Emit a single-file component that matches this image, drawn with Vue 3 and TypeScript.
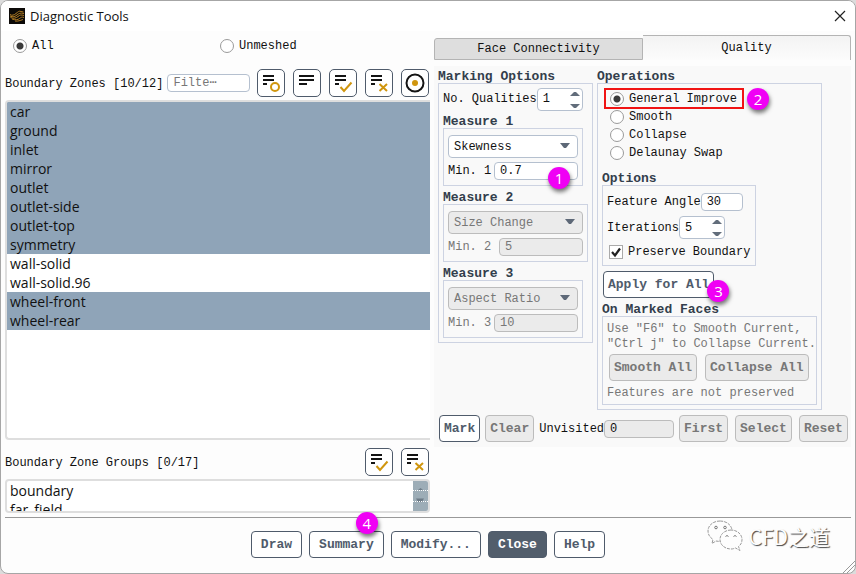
<script setup lang="ts">
import { reactive, ref } from 'vue'

interface Measure {
  id: number
  kind: string
  kinds: string[]
  min: string
  enabled: boolean
  wide: boolean
  note?: number
}

const scope = ref('All')
const scopes = ['All', 'Unmeshed']

const zones = [
  'car', 'ground', 'inlet', 'mirror', 'outlet', 'outlet-side', 'outlet-top',
  'symmetry', 'wall-solid', 'wall-solid.96', 'wheel-front', 'wheel-rear',
]
const selectedZones = ref(zones.filter((z) => !z.startsWith('wall')))

const groups = ['boundary', 'far_field']
const selectedGroups = ref<string[]>([])
const filter = ref('')

const qualities = ref(1)
const measures = reactive<Measure[]>([
  { id: 1, kind: 'Skewness', kinds: ['Skewness', 'Size Change', 'Aspect Ratio'], min: '0.7', enabled: true, wide: false, note: 1 },
  { id: 2, kind: 'Size Change', kinds: ['Skewness', 'Size Change', 'Aspect Ratio'], min: '5', enabled: false, wide: true },
  { id: 3, kind: 'Aspect Ratio', kinds: ['Skewness', 'Size Change', 'Aspect Ratio'], min: '10', enabled: false, wide: false },
])

const operation = ref('General Improve')
const operations = ['General Improve', 'Smooth', 'Collapse', 'Delaunay Swap']
const featureAngle = ref('30')
const iterations = ref(5)
const preserve = ref(true)
const unvisited = ref('0')

function selectAll(): void {
  selectedZones.value = [...zones]
}
function clearZones(): void {
  selectedZones.value = []
}
</script>

<template>
  <main class="dialog">
    <header class="titlebar">
      <svg class="logo" viewBox="0 0 16 16" aria-hidden="true">
        <rect width="16" height="16" fill="#0c0a08" />
        <g fill="none" stroke="#b07c24" stroke-width="1">
          <path d="M1 6.500C3 8 5 7 7 5.500S10 2.500 12 3.500L14.500 4" />
          <path d="M1 8C4 9.500 6 8.500 8 7S11 4.500 15 5.500" />
          <path d="M1.500 9.500C5 11 7 10 9 8.500S12 6.500 15 7.500" />
          <path d="M3 11C7 12.500 9 11.500 10.500 10.500S13 8.500 15 9.500" />
          <path d="M6 13C9 13.500 11 12.500 14 11.500" />
        </g>
      </svg>
      <h1>Diagnostic Tools</h1>
      <button class="close-x" type="button" aria-label="Close window">
        <svg viewBox="0 0 12 12"><path d="M1 1L11 11M11 1L1 11" stroke="#222" stroke-width="1.200" /></svg>
      </button>
    </header>

    <div class="body">
      <section class="left">
        <div class="scopes">
          <label v-for="s in scopes" :key="s" class="radio">
            <input v-model="scope" type="radio" name="scope" :value="s" />{{ s }}
          </label>
        </div>

        <div class="bar">
          <label class="bar-label" for="zone-filter">Boundary Zones [10/12]</label>
          <input id="zone-filter" v-model="filter" class="field filter" type="text" placeholder="Filte⋯" />
          <div class="tools">
            <button class="tool" type="button" aria-label="Toggle highlight">
              <svg viewBox="0 0 26 26"><path class="ln" d="M5 6H16M5 10H16M5 14H9" /><circle class="au" cx="17" cy="17" r="4" /></svg>
            </button>
            <button class="tool" type="button" aria-label="List order">
              <svg viewBox="0 0 26 26"><path class="ln" d="M5 6H20M5 10H20M5 14H13" /></svg>
            </button>
            <button class="tool" type="button" aria-label="Select all zones" @click="selectAll">
              <svg viewBox="0 0 26 26"><path class="ln" d="M5 6H16M5 10H16M5 14H9" /><path class="au" d="M10.500 17L14 21L21.500 12.500" /></svg>
            </button>
            <button class="tool" type="button" aria-label="Deselect all zones" @click="clearZones">
              <svg viewBox="0 0 26 26"><path class="ln" d="M5 6H16M5 10H16M5 14H9" /><path class="au" d="M13.500 14L21 21M21 14L13.500 21" /></svg>
            </button>
            <button class="tool" type="button" aria-label="Locate">
              <svg viewBox="0 0 26 26"><circle class="ln" cx="13" cy="13" r="8.500" /><circle cx="13" cy="13" r="3" fill="#d0960f" /></svg>
            </button>
          </div>
        </div>

        <select v-model="selectedZones" class="list zones" multiple aria-label="Boundary Zones">
          <option v-for="z in zones" :key="z" :value="z">{{ z }}</option>
        </select>

        <div class="bar">
          <label class="bar-label" for="groups">Boundary Zone Groups [0/17]</label>
          <div class="tools">
            <button class="tool" type="button" aria-label="Select all groups">
              <svg viewBox="0 0 26 26"><path class="ln" d="M5 6H16M5 10H16M5 14H9" /><path class="au" d="M10.500 17L14 21L21.500 12.500" /></svg>
            </button>
            <button class="tool" type="button" aria-label="Deselect all groups">
              <svg viewBox="0 0 26 26"><path class="ln" d="M5 6H16M5 10H16M5 14H9" /><path class="au" d="M13.500 14L21 21M21 14L13.500 21" /></svg>
            </button>
          </div>
        </div>
        <div class="group-box">
          <select id="groups" v-model="selectedGroups" class="list groups" multiple>
            <option v-for="g in groups" :key="g" :value="g">{{ g }}</option>
          </select>
          <svg class="scroll" viewBox="0 0 15 30" preserveAspectRatio="none" aria-hidden="true">
            <rect width="15" height="30" fill="#9dadb7" />
            <path d="M5 9L7.500 7L10 9Z" fill="#6e7c88" />
            <path d="M3 17.500H11L9 21H5Z" fill="#6e7c88" />
            <path d="M0 9.500H15M0 20.500H15" stroke="#fff" stroke-dasharray="1 1" />
          </svg>
        </div>
      </section>

      <section class="right">
        <nav class="tabs" role="tablist">
          <button class="tab" type="button" role="tab" aria-selected="false">Face Connectivity</button>
          <button class="tab active" type="button" role="tab" aria-selected="true">Quality</button>
        </nav>

        <div class="panel">
          <div class="columns">
            <section>
              <h2>Marking Options</h2>
              <div class="frame marking">
                <div class="row">
                  <label for="qualities">No. Qualities</label>
                  <span class="spin">
                    <input id="qualities" v-model="qualities" class="field" type="number" />
                    <svg viewBox="0 0 10 18" aria-hidden="true"><path d="M0 5L4 1H6L10 5ZM0 13L4 17H6L10 13Z" fill="#626d7b" /></svg>
                  </span>
                </div>
                <section v-for="m in measures" :key="m.id">
                  <h3>Measure {{ m.id }}</h3>
                  <div class="frame measure" :class="{ wide: m.wide, off: !m.enabled }">
                    <span class="combo">
                      <select v-model="m.kind" class="field" :disabled="!m.enabled" :aria-label="'Measure ' + m.id">
                        <option v-for="k in m.kinds" :key="k">{{ k }}</option>
                      </select>
                      <svg viewBox="0 0 10 5" aria-hidden="true"><path d="M0 0H10L6 5H4Z" fill="#5d6877" /></svg>
                    </span>
                    <div class="min">
                      <label :for="'min-' + m.id">Min. {{ m.id }}</label>
                      <span class="min-box">
                        <input :id="'min-' + m.id" v-model="m.min" class="field" type="text" :disabled="!m.enabled" />
                        <b v-if="m.note" class="badge on-min">{{ m.note }}</b>
                      </span>
                    </div>
                  </div>
                </section>
              </div>
            </section>

            <section>
              <h2>Operations</h2>
              <div class="frame operations">
                <div class="ops">
                  <label v-for="(o, i) in operations" :key="o" class="radio" :class="{ marked: i === 0 }">
                    <input v-model="operation" type="radio" name="operation" :value="o" />{{ o }}
                    <b v-if="i === 0" class="badge on-op">2</b>
                  </label>
                </div>

                <h3>Options</h3>
                <div class="frame options">
                  <div class="opt">
                    <label for="angle">Feature Angle</label>
                    <input id="angle" v-model="featureAngle" class="field angle" type="text" />
                  </div>
                  <div class="opt">
                    <label for="iterations">Iterations</label>
                    <span class="spin">
                      <input id="iterations" v-model="iterations" class="field" type="number" />
                      <svg viewBox="0 0 10 18" aria-hidden="true"><path d="M0 5L4 1H6L10 5ZM0 13L4 17H6L10 13Z" fill="#626d7b" /></svg>
                    </span>
                  </div>
                  <label class="check">
                    <span class="tick">
                      <input v-model="preserve" type="checkbox" />
                      <svg v-if="preserve" viewBox="0 0 14 14" aria-hidden="true"><path d="M3 7L6 10.500L11 3.500" fill="none" stroke="#222" stroke-width="2.200" /></svg>
                    </span>
                    Preserve Boundary
                  </label>
                </div>

                <button class="btn apply" type="button">Apply for All<b class="badge on-apply">3</b></button>

                <h3>On Marked Faces</h3>
                <div class="frame faces">
                  <p>Use "F6" to Smooth Current,<br />"Ctrl j" to Collapse Current.</p>
                  <div class="pair">
                    <button class="btn" type="button" disabled>Smooth All</button>
                    <button class="btn" type="button" disabled>Collapse All</button>
                  </div>
                  <p>Features are not preserved</p>
                </div>
              </div>
            </section>
          </div>

          <div class="marks">
            <button class="btn" type="button">Mark</button>
            <button class="btn" type="button" disabled>Clear</button>
            <div class="unvisited">
              <label for="unvisited">Unvisited</label>
              <input id="unvisited" v-model="unvisited" class="field" type="text" readonly />
            </div>
            <div class="nav">
              <button class="btn" type="button" disabled>First</button>
              <button class="btn" type="button" disabled>Select</button>
              <button class="btn" type="button" disabled>Reset</button>
            </div>
          </div>
        </div>
      </section>
    </div>

    <footer class="footer">
      <button class="btn" type="button">Draw</button>
      <button class="btn" type="button">Summary<b class="badge on-summary">4</b></button>
      <button class="btn" type="button">Modify...</button>
      <button class="btn primary" type="button">Close</button>
      <button class="btn" type="button">Help</button>
      <div class="brand">
        <svg viewBox="0 0 36 32" aria-hidden="true">
          <g fill="#fdfdfd" stroke="#999" stroke-width="1" stroke-dasharray="3 1">
            <path d="M13 1C6 1 1 5.500 1 11C1 14.500 3 17.500 6 19.500L5 23.500L9 21C11 21.500 13 21.500 15 21C22 20 25 16 25 11C25 5.500 20 1 13 1Z" />
            <path d="M24 10C17.500 10 13 14.500 13 19.500S17.500 29 24 29C25.500 29 27 28.700 28.500 28L33 30.500L31.500 26.500C34 24.500 35 22.500 35 19.500C35 14.500 30.500 10 24 10Z" />
          </g>
          <g fill="none" stroke="#777"><circle cx="9" cy="7.500" r="1.300" /><circle cx="18" cy="7.500" r="1.300" /><path d="M18.500 16.500Q20 14.500 21.500 16.500M26.500 16.500Q28 14.500 29.500 16.500" /></g>
        </svg>
        <span>CFD之道</span>
      </div>
      <svg class="grip" viewBox="0 0 12 12" aria-hidden="true"><path d="M0 12L12 0M4 12L12 4M8 12L12 8" stroke="#999" /></svg>
    </footer>
  </main>
</template>

<style>
body {
  background: #dcdcdc;
}
</style>

<style scoped>
.dialog,
.dialog * {
  box-sizing: border-box;
}
.dialog {
  display: flex;
  flex-direction: column;
  min-height: 100vh;
  overflow: hidden;
  border: 1px solid #a6a6a6;
  border-radius: 8px;
  background: #fdfdfd;
  color: #111;
  font: 12px/16px "Liberation Mono", "DejaVu Sans Mono", monospace;
}
button,
input,
select {
  margin: 0;
  font: inherit;
  color: inherit;
}
h1,
h2,
h3,
p {
  margin: 0;
}
.titlebar {
  display: flex;
  align-items: center;
  gap: 5px;
  height: 30px;
  padding: 0 9px 0 8px;
  background: #fff;
}
.logo {
  width: 16px;
  height: 16px;
}
h1 {
  flex: 1;
  font: 13px/18px "Open Sans", sans-serif;
}
.close-x {
  display: flex;
  padding: 0;
  border: 0;
  background: none;
}
.close-x svg {
  width: 12px;
  height: 12px;
}
.body {
  display: grid;
  grid-template-columns: 425fr 417fr;
  gap: 4px;
  flex: 1;
  padding: 0 4px 4px;
}
.left {
  display: flex;
  flex-direction: column;
  min-width: 0;
}
.scopes {
  display: grid;
  grid-template-columns: 207px 1fr;
  align-items: center;
  height: 30px;
  padding-left: 8px;
}
.radio {
  display: flex;
  align-items: center;
  gap: 5px;
}
.radio input {
  width: 14px;
  height: 14px;
  appearance: none;
  border: 1px solid #9a9a9a;
  border-radius: 50%;
  background: #fff;
}
.radio input:checked {
  background: radial-gradient(circle, #3a3a3a 3px, #fff 4px);
}
.bar {
  display: flex;
  align-items: center;
  gap: 4px;
  margin: 8px 1px 3px 0;
}
.bar-label {
  padding-top: 2px;
  white-space: nowrap;
}
.field {
  height: 18px;
  padding: 0 5px;
  border: 1px solid #b5c0cf;
  border-radius: 4px;
  background: #fff;
  outline: 0;
}
.filter {
  flex: 1;
  min-width: 0;
}
.filter::placeholder {
  color: #777;
}
.tools {
  display: flex;
  gap: 8px;
  margin-left: auto;
  padding-left: 3px;
}
.tool {
  width: 28px;
  height: 28px;
  padding: 0;
  border: 1px solid #4f5b6b;
  border-radius: 5px;
  background: #fff;
}
.tool svg {
  display: block;
  width: 26px;
  height: 26px;
}
.ln {
  fill: none;
  stroke: #141414;
  stroke-width: 2;
}
.au {
  fill: none;
  stroke: #d0960f;
  stroke-width: 2;
}
.list {
  display: block;
  width: 100%;
  padding: 0;
  border: 2px solid #dedede;
  border-radius: 4px;
  outline: 0;
  background: #fff;
  color: #111;
  font: 14px/19px "Open Sans", sans-serif;
  overflow: hidden;
  scrollbar-width: none;
}
.list option {
  height: 19px;
  min-height: 19px;
  padding: 0 3px;
}
.list option:checked {
  background: #8fa4b8 linear-gradient(#8fa4b8, #8fa4b8);
  color: #111;
}
.zones {
  flex: 1;
  min-height: 232px;
  border-right: 0;
  border-radius: 4px 0 0 4px;
}
.group-box {
  display: flex;
  overflow: hidden;
  height: 34px;
  border: 2px solid #dedede;
  border-radius: 4px;
}
.groups {
  flex: 1;
  height: 30px;
  border: 0;
}
.scroll {
  width: 15px;
  height: 30px;
}
.right {
  display: flex;
  flex-direction: column;
  min-width: 0;
  padding-top: 4px;
}
.tabs {
  display: flex;
  align-items: flex-end;
}
.tab {
  flex: 1;
  height: 22px;
  padding: 0;
  border: 1px solid #b4b4b4;
  border-radius: 3px 0 0 0;
  background: #dedede;
}
.tab.active {
  height: 25px;
  border-width: 1px 1px 0 0;
  border-radius: 0 3px 0 0;
  background: linear-gradient(#f3f3f3, #fcfcfc);
}
.panel {
  margin-top: 6px;
  padding: 2px 4px 5px;
  background: #f9f9f9;
}
h2,
h3 {
  color: #333e4c;
  font: bold 13px/13px "Liberation Mono", monospace;
}
h2 {
  padding-top: 2px;
}
h3 {
  padding-top: 5px;
}
.columns {
  display: flex;
  align-items: flex-start;
  gap: 4px;
}
.frame {
  width: fit-content;
  border: 1px solid #cdd3e2;
}
.marking {
  padding: 4px;
}
.row,
.opt,
.min {
  display: flex;
  align-items: center;
}
.row {
  height: 22px;
}
.spin {
  position: relative;
  display: flex;
}
.spin input {
  width: 46px;
  height: 23px;
  appearance: textfield;
}
.spin input::-webkit-inner-spin-button {
  display: none;
}
.spin svg {
  position: absolute;
  top: 3px;
  right: 3px;
  width: 10px;
  height: 18px;
}
.measure {
  width: 140px;
  padding: 6px 4px 5px;
}
.measure.wide {
  width: 145px;
}
.off {
  color: #777;
}
.combo {
  position: relative;
  display: block;
}
.combo select {
  display: block;
  width: 100%;
  height: 23px;
  appearance: none;
  opacity: 1;
}
.combo svg {
  position: absolute;
  top: 8px;
  right: 8px;
  width: 10px;
  height: 5px;
  pointer-events: none;
}
.min {
  justify-content: space-between;
  padding-top: 4px;
}
.min-box {
  position: relative;
  display: flex;
}
.min-box input {
  width: 84px;
}
.off .field,
.unvisited .field {
  border-color: #bcbcbc;
  background: #ebebeb;
}
.operations {
  padding: 6px 4px 4px;
}
.ops {
  padding: 0 0 5px 8px;
}
.ops .radio {
  position: relative;
  width: 129px;
  height: 18px;
  white-space: nowrap;
}
.marked::after {
  content: "";
  position: absolute;
  inset: -2px -5px -1px -6px;
  border: 2px solid #f01414;
}
.options {
  width: 154px;
  padding: 7px 4px 5px;
}
.angle {
  width: 42px;
}
.opt + .opt {
  margin-top: 5px;
}
.check {
  display: flex;
  align-items: center;
  gap: 5px;
  margin-top: 5px;
  padding-left: 2px;
  white-space: nowrap;
}
.tick {
  position: relative;
  display: flex;
}
.tick input {
  width: 14px;
  height: 14px;
  appearance: none;
  border: 1px solid #aaa;
  background: #fff;
}
.tick svg {
  position: absolute;
  inset: 0;
  pointer-events: none;
}
.btn {
  position: relative;
  height: 27px;
  padding: 0 4px;
  border: 1px solid #4f5b6b;
  border-radius: 4px;
  background: #fff;
  color: #4f5b6b;
  font-weight: bold;
  font-size: 13px;
  white-space: nowrap;
}
.btn:disabled {
  border-color: #bcbcbc;
  background: #ebebeb;
  color: #777;
}
.apply {
  display: block;
  margin: 5px 0 0 1px;
}
.faces {
  padding: 5px 0 3px 4px;
  color: #777;
}
.faces p {
  line-height: 15px;
}
.pair {
  display: flex;
  gap: 8px;
  padding: 2px 4px 5px 2px;
}
.marks {
  display: flex;
  align-items: center;
  gap: 5px;
  padding: 5px 0 0 1px;
}
.unvisited {
  display: flex;
  align-items: center;
}
.unvisited .field {
  width: 70px;
}
.nav {
  display: flex;
  gap: 7px;
}
.footer {
  position: relative;
  display: flex;
  justify-content: center;
  gap: 7px;
  margin: 0 4px;
  padding: 13px 0 15px;
  border-top: 1px solid #999;
}
.footer .btn {
  padding: 0 9px;
}
.footer .primary {
  background: #525e6c;
  color: #fff;
}
.badge {
  position: absolute;
  z-index: 1;
  width: 22px;
  height: 22px;
  border-radius: 50%;
  background: #f000f5;
  box-shadow: 1px 3px 4px #0008;
  color: #fff;
  font: 15px/22px "Open Sans", sans-serif;
  text-align: center;
}
.on-min {
  top: 5px;
  right: 8px;
}
.on-op {
  top: -2px;
  right: -30px;
}
.on-apply {
  top: 8px;
  right: -16px;
}
.on-summary {
  top: -20px;
  right: 5px;
}
.brand {
  position: absolute;
  top: 2px;
  right: 21px;
  display: flex;
  align-items: center;
  gap: 6px;
  color: #fdfdfd;
  font: 21px/30px "Noto Sans CJK SC", sans-serif;
  text-shadow: 1px 1px 1px #444;
}
.brand svg {
  width: 36px;
  height: 32px;
}
.grip {
  position: absolute;
  right: -4px;
  bottom: 0;
  width: 12px;
  height: 12px;
}
</style>
